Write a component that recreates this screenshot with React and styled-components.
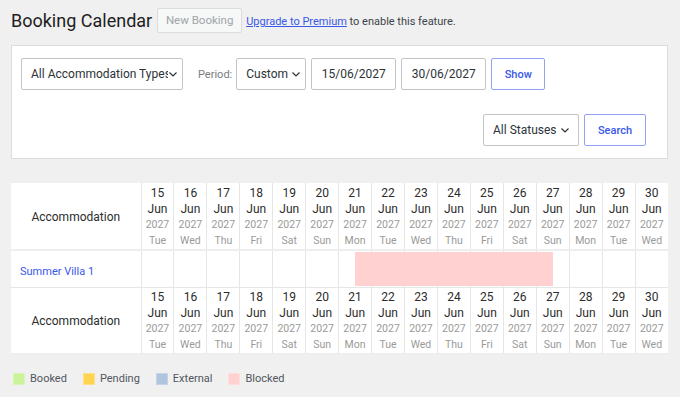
import React from 'react'
import styled, { createGlobalStyle } from 'styled-components'

const GlobalStyle = createGlobalStyle`
body {
    margin: 0;
    background: #f0f0f0;
    font-family: Roboto, "Noto Sans", sans-serif;
    color: #1e1e1e;
}
`

const Page = styled.div`
padding: 7px 12px 0 11px;
`

const TopBar = styled.div`
display: flex;
align-items: center;
height: 26px;
`

const Title = styled.h1`
margin: 0 5px 0 0;
font-size: 18px;
font-weight: 400;
color: #1e1e1e;
`

const GhostButton = styled.span`
display: inline-flex;
align-items: center;
justify-content: center;
box-sizing: border-box;
width: 85px;
height: 25px;
border: 1px solid #dcdcde;
background: #f6f7f7;
color: #a0a5aa;
font-size: 11.5px;
border-radius: 2px;
margin-right: 4px;
`

const Notice = styled.span`
font-size: 11px;
color: #3c434a;
padding-top: 3px;
`

const UpgradeLink = styled.a`
color: #3858e9;
text-decoration: underline;
`

const FilterBox = styled.div`
margin-top: 12px;
background: #fff;
border: 1px solid #dcdcde;
padding: 12px 21px 12px 9px;
`

const FilterRow = styled.div`
display: flex;
align-items: center;
gap: 5px;
justify-content: ${p => (p.$end ? 'flex-end' : 'flex-start')};
margin-top: ${p => p.$top || 0}px;
`

const Select = styled.div`
display: flex;
align-items: center;
justify-content: space-between;
box-sizing: border-box;
width: ${p => p.$w}px;
height: 32px;
padding: 0 ${p => p.$pr || 6}px 0 9px;
border: 1px solid #c3c4c7;
border-radius: 2px;
font-size: 12px;
color: #2c3338;
white-space: nowrap;
overflow: hidden;
`

const SelectText = styled.span`
overflow: hidden;
flex: 1;
`

const Chevron = styled.svg`
width: 10px;
height: 10px;
flex-shrink: 0;
`

const Label = styled.span`
font-size: 11px;
color: #787c82;
margin: 0 -1px 0 10px;
`

const DateInput = styled.div`
display: flex;
align-items: center;
justify-content: center;
box-sizing: border-box;
width: 85px;
height: 32px;
border: 1px solid #c3c4c7;
border-radius: 2px;
font-size: 12px;
color: #2c3338;
`

const BlueButton = styled.div`
display: flex;
align-items: center;
justify-content: center;
box-sizing: border-box;
width: ${p => p.$w}px;
height: 32px;
border: 1px solid #93a2f5;
border-radius: 2px;
font-size: 11px;
font-weight: 500;
color: #3858e9;
`

const CalendarTable = styled.table`
margin-top: 24px;
width: 657px;
border-collapse: collapse;
table-layout: fixed;
background: #fff;
`

const AccCol = styled.col`
width: 130px;
`

const HeadCell = styled.th`
border: 1px solid #e6e6e6;
border-top: none;
padding: 1px 0 0;
font-weight: 400;
text-align: center;
vertical-align: middle;
font-size: 12px;
color: #2c2c2c;
height: ${p => p.$h}px;
&:first-child { border-left: none; }
&:last-child { border-right: none; }
`

const HeaderRow = styled.tr`
border-bottom: 2px solid #eee;
`

const Line = styled.div`
line-height: 16px;
font-size: ${p => (p.$small ? 10.5 : 12)}px;
color: ${p => (p.$small ? '#9a9a9a' : '#2c2c2c')};
`

const BodyCell = styled.td`
border: 1px solid #e6e6e6;
height: 36px;
padding: 0;
position: relative;
&:first-child { border-left: none; padding-left: 9px; }
&:last-child { border-right: none; }
`

const VillaLink = styled.a`
font-size: 11px;
color: #3858e9;
text-decoration: none;
`

const BlockedBar = styled.div`
position: absolute;
top: 1px;
bottom: 1px;
left: 50%;
width: ${p => p.$span * 32.94}px;
background: #ffd1d1;
z-index: 1;
`

const Legend = styled.div`
display: flex;
align-items: center;
gap: 16px;
margin-top: 17px;
padding-left: 2px;
`

const LegendItem = styled.div`
display: flex;
align-items: center;
gap: 5px;
font-size: 11px;
color: #50575e;
`

const Swatch = styled.span`
width: 12px;
height: 12px;
box-sizing: border-box;
background: ${p => p.$color};
border: 1px solid ${p => p.$border};
`

const days = [
    [15, 'Tue'], [16, 'Wed'], [17, 'Thu'], [18, 'Fri'], [19, 'Sat'], [20, 'Sun'],
    [21, 'Mon'], [22, 'Tue'], [23, 'Wed'], [24, 'Thu'], [25, 'Fri'], [26, 'Sat'],
    [27, 'Sun'], [28, 'Mon'], [29, 'Tue'], [30, 'Wed'],
]

const legend = [
    ['Booked', '#ccf29a', '#d9f5b5'],
    ['Pending', '#ffd54f', '#ffe08a'],
    ['External', '#b0c4de', '#c5d3e8'],
    ['Blocked', '#ffd1d1', '#ffdede'],
]

const Down = () => (
    <Chevron viewBox="0 0 10 10">
        <path d="M1.5 3.5 L5 7 L8.5 3.5" fill="none" stroke="#2c3338" strokeWidth="1.2" />
    </Chevron>
)

const DateHeader = ({ h }) => (
    <HeaderRow>
        <HeadCell $h={h}>Accommodation</HeadCell>
        {days.map(([d, w]) => (
            <HeadCell key={d} $h={h}>
                <Line>{d}</Line>
                <Line>Jun</Line>
                <Line $small>2027</Line>
                <Line $small>{w}</Line>
            </HeadCell>
        ))}
    </HeaderRow>
)

const App = () => (
    <Page>
        <GlobalStyle />
        <TopBar>
            <Title>Booking Calendar</Title>
            <GhostButton>New Booking</GhostButton>
            <Notice>
                <UpgradeLink href="#">Upgrade to Premium</UpgradeLink> to enable this feature.
            </Notice>
        </TopBar>

        <FilterBox>
            <FilterRow>
                <Select $w={162} $pr={4}><SelectText>All Accommodation Types</SelectText><Down /></Select>
                <Label>Period:</Label>
                <Select $w={70} $pr={4}><SelectText>Custom</SelectText><Down /></Select>
                <DateInput>15/06/2027</DateInput>
                <DateInput>30/06/2027</DateInput>
                <BlueButton $w={54}>Show</BlueButton>
            </FilterRow>
            <FilterRow $end $top={24}>
                <Select $w={96} $pr={8}><SelectText>All Statuses</SelectText><Down /></Select>
                <BlueButton $w={62}>Search</BlueButton>
            </FilterRow>
        </FilterBox>

        <CalendarTable>
            <colgroup>
                <AccCol />
                {days.map(([d]) => <col key={d} />)}
            </colgroup>
            <thead>
                <DateHeader h={65} />
            </thead>
            <tbody>
                <tr>
                    <BodyCell><VillaLink href="#">Summer Villa 1</VillaLink></BodyCell>
                    {days.map(([d]) => (
                        <BodyCell key={d}>{d === 21 && <BlockedBar $span={6} />}</BodyCell>
                    ))}
                </tr>
            </tbody>
            <tfoot>
                <DateHeader h={64} />
            </tfoot>
        </CalendarTable>

        <Legend>
            {legend.map(([name, c, b]) => (
                <LegendItem key={name}>
                    <Swatch $color={c} $border={b} />
                    {name}
                </LegendItem>
            ))}
        </Legend>
    </Page>
)

export default App
